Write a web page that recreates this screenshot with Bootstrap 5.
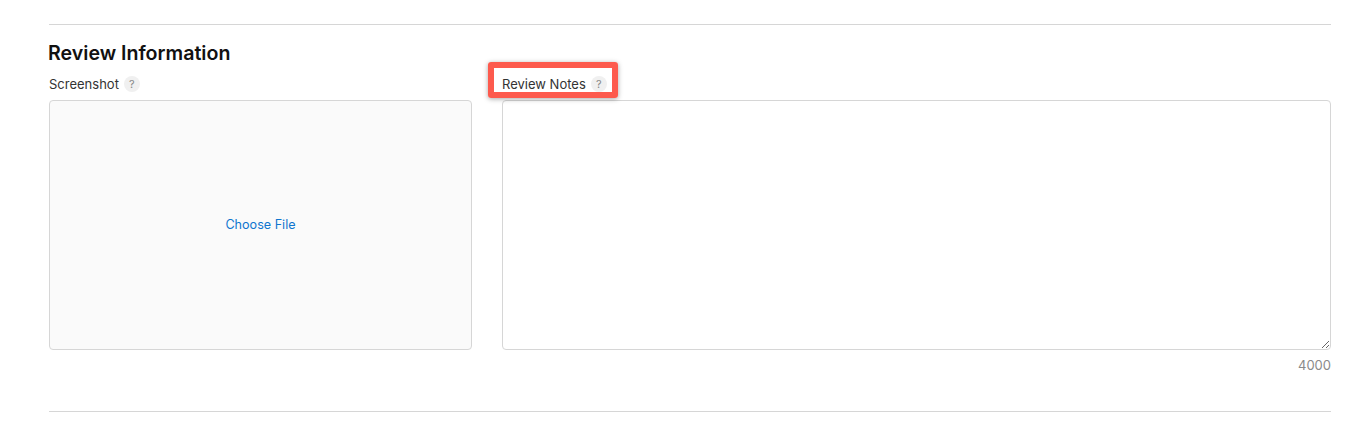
<!DOCTYPE html>
<html lang="en">
<head>
  <meta charset="UTF-8" />
  <meta name="viewport" content="width=device-width, initial-scale=1.0"/>
  <title>Review Information</title>
  <link href="https://cdn.jsdelivr.net/npm/bootstrap@5.3.0/dist/css/bootstrap.min.css" rel="stylesheet"/>
  <style>
    body {
      background: #fff;
      font-family: Inter, "Liberation Sans", sans-serif;
      color: #333;
      padding: 24px 32px 0 49px;
    }
    .rule {
      height: 1px;
      background: #d6d6d6;
    }
    .section-title {
      font-size: 19.6px;
      line-height: 24px;
      font-weight: 600;
      color: #111;
      margin: 16px 0 0 -1px;
    }
    .columns {
      margin-top: 11px;
      gap: 30px;
    }
    .col-shot {
      width: 423px;
    }
    .field-label {
      height: 24px;
      font-size: 13px;
      line-height: 16px;
      color: #333;
    }
    .help-dot {
      width: 16px;
      height: 16px;
      border-radius: 50%;
      background: #f0f0f0;
      color: #888;
      font-size: 11px;
      line-height: 16px;
      text-align: center;
      margin-left: 5px;
    }
    .drop-box {
      height: 250px;
      background: #fafafa;
      border: 1px solid #d6d6d6;
      border-radius: 4px;
    }
    .drop-box a {
      color: #0f76cf;
      font-size: 12.6px;
      text-decoration: none;
    }
    .notes-area {
      display: block;
      width: 100%;
      height: 250px;
      border: 1px solid #d6d6d6;
      border-radius: 4px;
      outline: none;
    }
    .char-count {
      font-size: 13px;
      line-height: 16px;
      color: #8a8a8a;
      margin-top: 7px;
    }
    .rule-bottom {
      margin-top: 38px;
    }
    .callout {
      position: absolute;
      left: -14px;
      top: -38px;
      width: 130px;
      height: 36px;
      border: 6px solid #fd5a4d;
      border-radius: 3px;
      box-shadow: 0 1px 5px rgba(0, 0, 0, .35);
    }
  </style>
</head>
<body>
  <div class="rule"></div>
  <h2 class="section-title">Review Information</h2>
  <div class="d-flex columns">
    <div class="col-shot flex-shrink-0">
      <div class="field-label d-flex align-items-start">
        <span>Screenshot</span><span class="help-dot">?</span>
      </div>
      <div class="drop-box d-flex align-items-center justify-content-center">
        <a href="#">Choose File</a>
      </div>
    </div>
    <div class="flex-grow-1 position-relative">
      <div class="field-label d-flex align-items-start">
        <span>Review Notes</span><span class="help-dot">?</span>
      </div>
      <div class="position-relative">
        <div class="callout"></div>
        <textarea class="notes-area"></textarea>
      </div>
      <div class="char-count text-end">4000</div>
    </div>
  </div>
  <div class="rule rule-bottom"></div>
  <script src="https://cdn.jsdelivr.net/npm/bootstrap@5.3.0/dist/js/bootstrap.bundle.min.js"></script>
</body>
</html>
